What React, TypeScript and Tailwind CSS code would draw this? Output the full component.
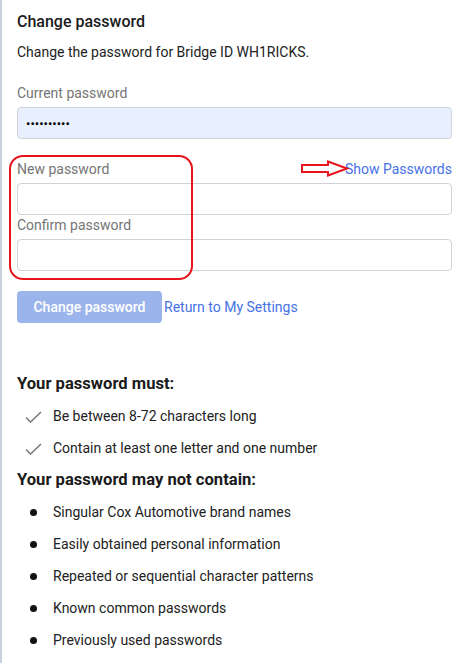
import React from "react";

const mustItems = ["Be between 8-72 characters long", "Contain at least one letter and one number"];

const mayNotItems = [
  "Singular Cox Automotive brand names",
  "Easily obtained personal information",
  "Repeated or sequential character patterns",
  "Known common passwords",
  "Previously used passwords",
];

function Check() {
  return (
    <svg width="17" height="12" viewBox="0 0 17 12" fill="none">
      <path d="M1 6.5 L5.5 11 L16 1" stroke="#7a7a7a" strokeWidth="1.6" />
    </svg>
  );
}

export default function App() {
  return (
    <div
      className="relative min-h-screen w-[466px] border-l-2 border-[#c9cfdb] bg-white pl-[15px] pr-[14px] pt-[10px] text-[#222]"
      style={{ fontFamily: "Roboto, 'Liberation Sans', sans-serif" }}
    >
      <h1 className="h-6 text-[16px] leading-6 font-medium text-[#1a1a1a]">Change password</h1>
      <p className="mt-2 text-[14px] leading-5">Change the password for Bridge ID WH1RICKS.</p>

      {/* Current password */}
      <label className="mt-[21px] block text-[14px] leading-5 text-[#757575]">Current password</label>
      <input
        type="password"
        readOnly
        value="aaaaaaaaaa"
        className="mt-1 block h-8 w-full rounded-[4px] border border-[#cfd3da] bg-[#e8f0fe] px-2 text-[13px] text-black outline-none"
      />

      {/* New password */}
      <div className="mt-5 flex h-5 items-center justify-between text-[14px] leading-5">
        <label className="text-[#757575]">New password</label>
        <a className="text-[#4672e6]">Show Passwords</a>
      </div>
      <input type="password" className="mt-1 block h-8 w-full rounded-[4px] border border-[#cfd3da] bg-white outline-none" />

      <label className="block text-[14px] leading-5 text-[#757575]">Confirm password</label>
      <input type="password" className="mt-1 block h-8 w-full rounded-[4px] border border-[#cfd3da] bg-white outline-none" />

      <div className="mt-5 flex items-center gap-[2px]">
        <button className="h-8 w-[145px] rounded-[4px] bg-[#9bb5ec] text-[14px] font-medium text-white">
          Change password
        </button>
        <a className="text-[14px] text-[#4672e6]">Return to My Settings</a>
      </div>

      <h2 className="mt-[49px] h-6 text-[16.6px] leading-6 font-bold text-[#1a1a1a]">Your password must:</h2>
      <ul className="mt-1">
        {mustItems.map((t) => (
          <li key={t} className="flex h-8 items-center text-[14px]">
            <span className="ml-[8px] flex w-[28px] items-center pt-[2px]">
              <Check />
            </span>
            <span>{t}</span>
          </li>
        ))}
      </ul>

      <h2 className="mt-1 h-6 text-[16.6px] leading-6 font-bold text-[#1a1a1a]">Your password may not contain:</h2>
      <ul className="mt-1">
        {mayNotItems.map((t) => (
          <li key={t} className="flex h-8 items-center text-[14px]">
            <span className="ml-[13px] mr-[16px] h-[7px] w-[7px] rounded-full bg-[#111]" />
            <span>{t}</span>
          </li>
        ))}
      </ul>

      {/* annotation overlay */}
      <div className="pointer-events-none absolute left-[7px] top-[155px] h-[125px] w-[184px] rounded-[14px] border-2 border-[#e8141c]" />
      <svg className="pointer-events-none absolute left-[298px] top-[160px]" width="50" height="17" viewBox="0 0 50 17" fill="none">
        <path d="M2 5 L28 5 L28 1.5 L47 8.5 L28 15.5 L28 12 L2 12 Z" stroke="#e8141c" strokeWidth="2" strokeLinejoin="miter" />
      </svg>
    </div>
  );
}
